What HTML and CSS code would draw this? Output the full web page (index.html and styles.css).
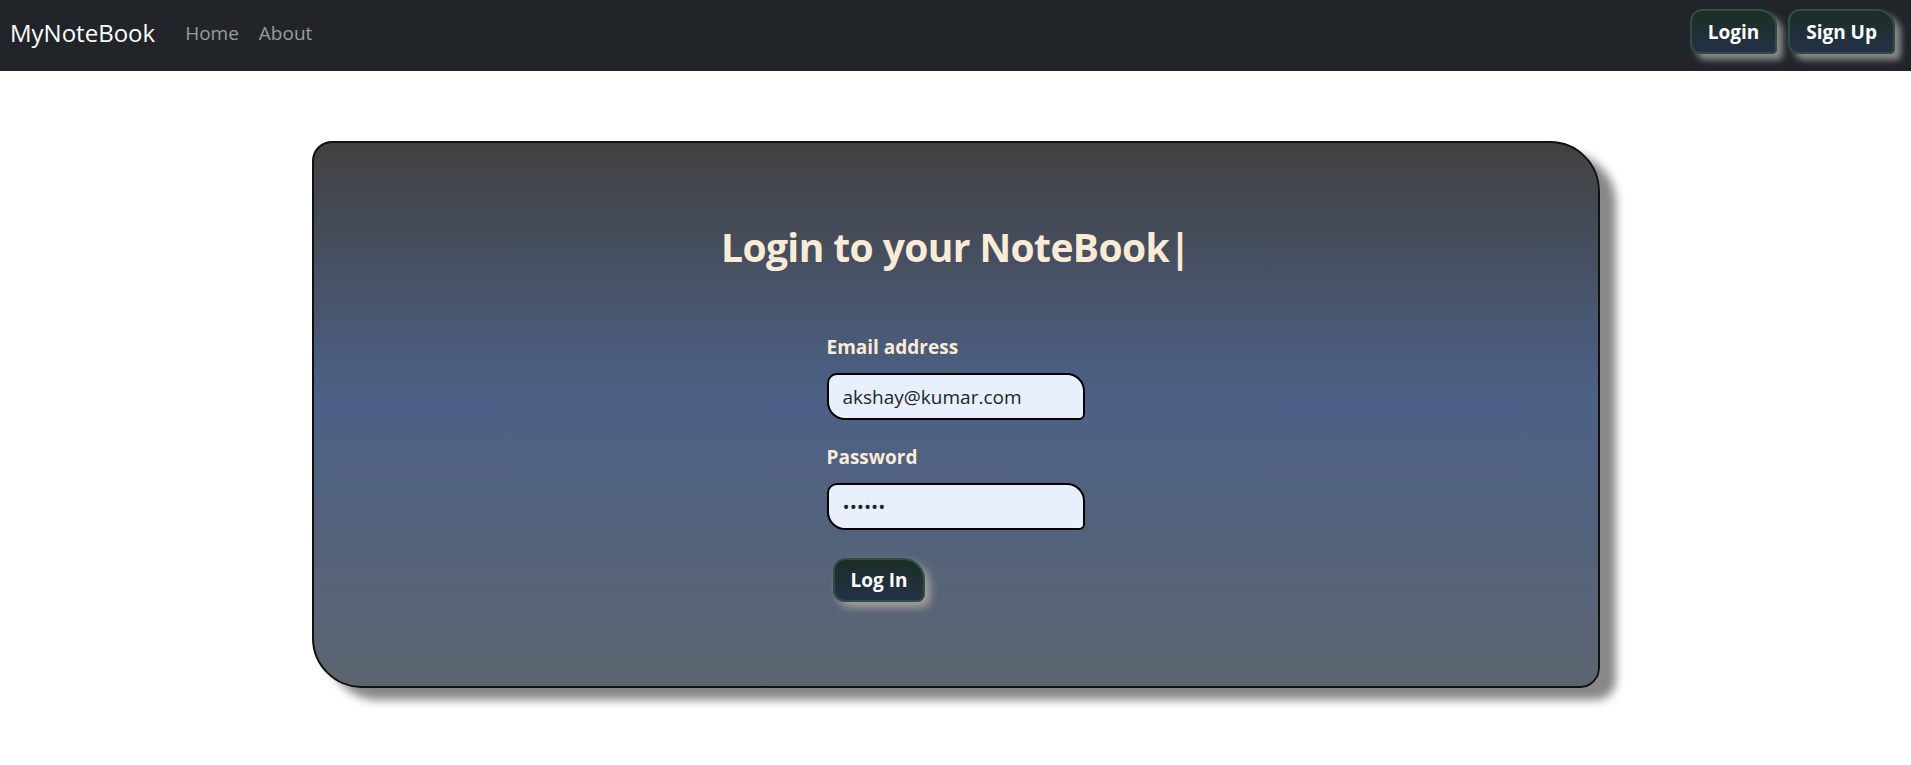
FILE: index.html
```html
<!DOCTYPE html>
<html lang="en">
<head>
<meta charset="utf-8">
<title>MyNoteBook</title>
<link rel="stylesheet" href="styles.css">
</head>
<body>
<nav class="navbar">
  <div class="nav-left">
    <a class="brand" href="#">MyNoteBook</a>
    <a class="nav-link" href="#">Home</a>
    <a class="nav-link" href="#">About</a>
  </div>
  <div class="nav-right">
    <a class="btn-fancy" href="#">Login</a>
    <a class="btn-fancy" href="#">Sign Up</a>
  </div>
</nav>
<main class="page">
  <section class="card">
    <h2 class="title">Login to your NoteBook|</h2>
    <form class="form">
      <label class="label" for="email">Email address</label>
      <input class="input" id="email" type="email" value="akshay@kumar.com">
      <label class="label label-pw" for="password">Password</label>
      <input class="input" id="password" type="password" value="123456">
      <button class="btn-fancy btn-submit" type="button">Log In</button>
    </form>
  </section>
</main>
</body>
</html>
```

FILE: styles.css
```css
* { box-sizing: border-box; }

body {
  margin: 0;
  font-family: "Open Sans", "Noto Sans", sans-serif;
  background: #fff;
  color: #212529;
}

.navbar {
  height: 71px;
  background: #212529;
  display: flex;
  align-items: flex-start;
  justify-content: space-between;
  padding: 9px 16px 0 10px;
}

.nav-left {
  display: flex;
  align-items: center;
  height: 45px;
  padding-top: 2px;
}

.brand {
  color: #fff;
  text-decoration: none;
  font-size: 24px;
  margin-right: 30px;
}

.nav-link {
  color: rgba(255, 255, 255, 0.55);
  text-decoration: none;
  font-size: 19px;
  margin-right: 20px;
}

.nav-right {
  display: flex;
  gap: 11px;
}

.btn-fancy {
  display: inline-flex;
  align-items: center;
  justify-content: center;
  height: 45px;
  padding: 0 16px;
  color: #fff;
  font-family: inherit;
  font-weight: 700;
  font-size: 19px;
  text-decoration: none;
  background: linear-gradient(#1b2e25, #243146);
  border: 2px solid #2e4d46;
  border-radius: 12px 18px 5px 10px;
  box-shadow: 6px 6px 6px #888;
}

.page {
  padding-top: 70px;
  padding-bottom: 40px;
}

.card {
  width: 1288px;
  height: 547px;
  margin: 0 auto;
  border: 2px solid #111;
  border-radius: 20px 50px;
  background: linear-gradient(#414141 0%, #4c6187 47%, #5c646f 100%);
  box-shadow: 16px 12px 10px #888;
  display: flex;
  flex-direction: column;
  align-items: center;
  padding-top: 80px;
}

.title {
  margin: 0;
  color: #faebd7;
  font-size: 39px;
  font-weight: 700;
  line-height: 48px;
  letter-spacing: -0.6px;
}

.form {
  width: 258px;
  margin-top: 64px;
  display: flex;
  flex-direction: column;
  align-items: flex-start;
}

.label {
  color: #faebd7;
  font-weight: 700;
  font-size: 19px;
  line-height: 24px;
  margin-bottom: 14px;
}

.label-pw {
  margin-top: 25px;
}

.input {
  width: 258px;
  height: 47px;
  border: 2px solid #000;
  border-radius: 10px 18px 6px 18px;
  background: #e8f0fe;
  color: #212529;
  font-family: inherit;
  font-size: 19px;
  padding: 0 14px;
  outline: none;
}

.btn-submit {
  margin-top: 28px;
  margin-left: 6px;
  height: 44px;
  padding: 0 16px;
  border-radius: 13px 22px 8px 12px;
  box-shadow: 5px 5px 10px #a8a49e;
  cursor: pointer;
}
```
